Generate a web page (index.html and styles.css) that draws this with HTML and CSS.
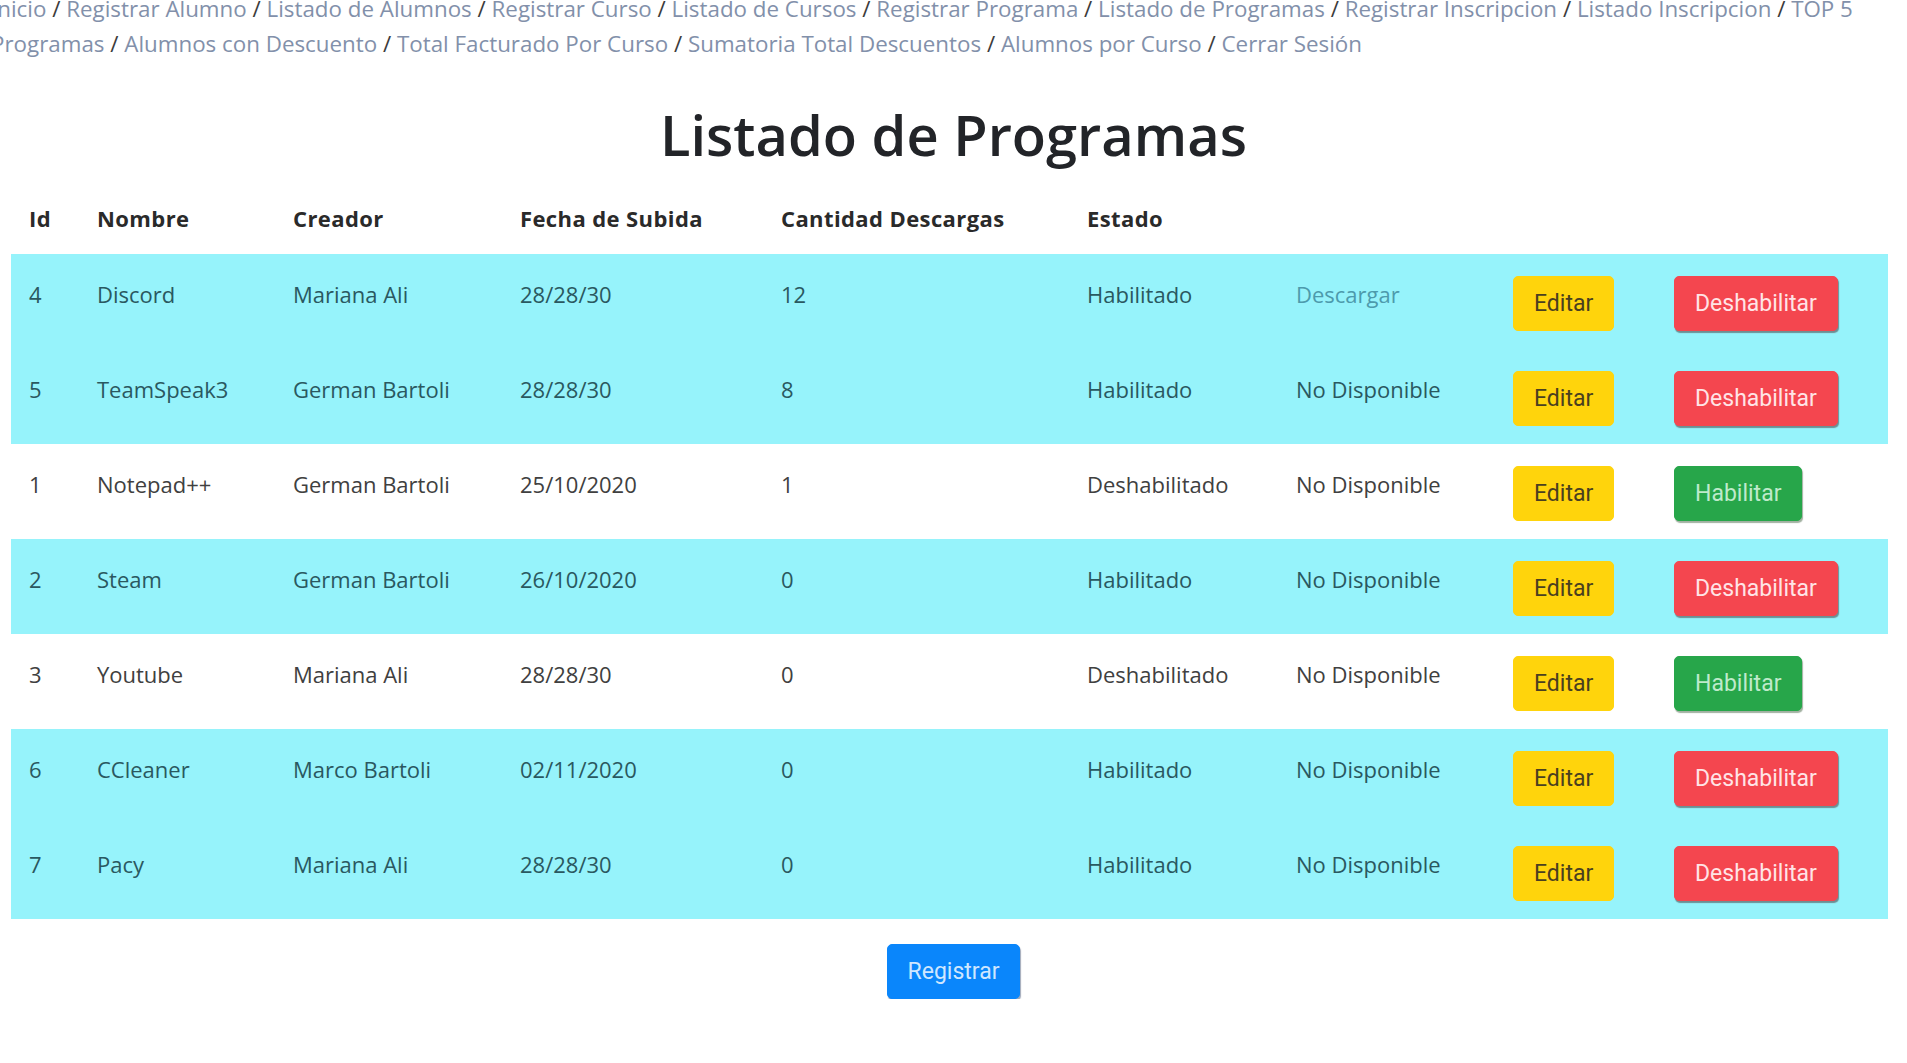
FILE: index.html
```html
<!DOCTYPE html>
<html lang="es">
<head>
<meta charset="utf-8">
<title>Listado de Programas</title>
<link rel="stylesheet" href="styles.css">
</head>
<body>
<nav class="topnav">
  <a href="#">Inicio</a> / <a href="#">Registrar Alumno</a> / <a href="#">Listado de Alumnos</a> / <a href="#">Registrar Curso</a> / <a href="#">Listado de Cursos</a> / <a href="#">Registrar Programa</a> / <a href="#">Listado de Programas</a> / <a href="#">Registrar Inscripcion</a> / <a href="#">Listado Inscripcion</a> / <a href="#">TOP 5<br>Programas</a> / <a href="#">Alumnos con Descuento</a> / <a href="#">Total Facturado Por Curso</a> / <a href="#">Sumatoria Total Descuentos</a> / <a href="#">Alumnos por Curso</a> / <a href="#">Cerrar Sesión</a>
</nav>

<h1 class="page-title">Listado de Programas</h1>

<table class="prog-table">
  <colgroup>
    <col class="c-id"><col class="c-nombre"><col class="c-creador"><col class="c-fecha"><col class="c-cant"><col class="c-estado"><col class="c-desc"><col class="c-edit"><col class="c-toggle">
  </colgroup>
  <thead>
    <tr><th>Id</th><th>Nombre</th><th>Creador</th><th>Fecha de Subida</th><th>Cantidad Descargas</th><th>Estado</th><th></th><th></th><th></th></tr>
  </thead>
  <tbody>
    <tr class="row-info"><td>4</td><td>Discord</td><td>Mariana Ali</td><td>28/28/30</td><td>12</td><td>Habilitado</td><td><a class="dl" href="#">Descargar</a></td><td><button class="btn btn-warning">Editar</button></td><td><button class="btn btn-danger">Deshabilitar</button></td></tr>
    <tr class="row-info"><td>5</td><td>TeamSpeak3</td><td>German Bartoli</td><td>28/28/30</td><td>8</td><td>Habilitado</td><td>No Disponible</td><td><button class="btn btn-warning">Editar</button></td><td><button class="btn btn-danger">Deshabilitar</button></td></tr>
    <tr class="row-plain"><td>1</td><td>Notepad++</td><td>German Bartoli</td><td>25/10/2020</td><td>1</td><td>Deshabilitado</td><td>No Disponible</td><td><button class="btn btn-warning">Editar</button></td><td><button class="btn btn-success">Habilitar</button></td></tr>
    <tr class="row-info"><td>2</td><td>Steam</td><td>German Bartoli</td><td>26/10/2020</td><td>0</td><td>Habilitado</td><td>No Disponible</td><td><button class="btn btn-warning">Editar</button></td><td><button class="btn btn-danger">Deshabilitar</button></td></tr>
    <tr class="row-plain"><td>3</td><td>Youtube</td><td>Mariana Ali</td><td>28/28/30</td><td>0</td><td>Deshabilitado</td><td>No Disponible</td><td><button class="btn btn-warning">Editar</button></td><td><button class="btn btn-success">Habilitar</button></td></tr>
    <tr class="row-info"><td>6</td><td>CCleaner</td><td>Marco Bartoli</td><td>02/11/2020</td><td>0</td><td>Habilitado</td><td>No Disponible</td><td><button class="btn btn-warning">Editar</button></td><td><button class="btn btn-danger">Deshabilitar</button></td></tr>
    <tr class="row-info"><td>7</td><td>Pacy</td><td>Mariana Ali</td><td>28/28/30</td><td>0</td><td>Habilitado</td><td>No Disponible</td><td><button class="btn btn-warning">Editar</button></td><td><button class="btn btn-danger">Deshabilitar</button></td></tr>
  </tbody>
</table>

<div class="actions">
  <button class="btn btn-primary">Registrar</button>
</div>
</body>
</html>
```

FILE: styles.css
```css
html, body {
  margin: 0;
  padding: 0;
  background: #ffffff;
}

body {
  font-family: "Open Sans", "Noto Sans", sans-serif;
  font-size: 22px;
  color: #3a3a3a;
  overflow: hidden;
}

.topnav {
  margin: -9px 0 0 -9px;
  font-size: 22.35px;
  line-height: 35px;
  white-space: nowrap;
  color: #3c3c3c;
}

.topnav a {
  color: #8290aa;
  text-decoration: none;
}

.page-title {
  margin: 39px 0 0 0;
  text-align: center;
  font-size: 56px;
  line-height: 68px;
  font-weight: 600;
  color: #222428;
}

.prog-table {
  margin: 18px 0 0 11px;
  width: 1877px;
  table-layout: fixed;
  border-collapse: collapse;
}

.c-id { width: 68px; }
.c-nombre { width: 196px; }
.c-creador { width: 227px; }
.c-fecha { width: 261px; }
.c-cant { width: 306px; }
.c-estado { width: 209px; }
.c-desc { width: 217px; }
.c-edit { width: 161px; }
.c-toggle { width: 232px; }

.prog-table th {
  text-align: left;
  font-weight: 700;
  letter-spacing: 0.4px;
  color: #2a2a2a;
  padding: 16px 0 19px 18px;
  line-height: 33px;
  white-space: nowrap;
}

.prog-table td {
  padding: 22px 0 18px 18px;
  line-height: 37px;
  vertical-align: top;
  white-space: nowrap;
}

.row-info td {
  background: #96f3fb;
  color: #2a5860;
}

.row-plain td {
  background: #ffffff;
  color: #404040;
}

.dl {
  color: #4d9aac;
  text-decoration: none;
}

.btn {
  display: inline-block;
  font-family: Roboto, "Noto Sans", sans-serif;
  font-size: 23px;
  line-height: 33px;
  padding: 10px 20px;
  border: 1px solid transparent;
  border-radius: 5px;
  cursor: pointer;
  vertical-align: top;
}

.btn-warning {
  background: #ffd40c;
  border-color: #ffd40c;
  color: #4a4020;
}

.btn-danger {
  background: #f4464f;
  border-color: #f4464f;
  color: #ffe4e6;
  box-shadow: 1px 2px 1px rgba(60, 20, 20, 0.45);
}

.btn-success {
  background: #27a64a;
  border-color: #27a64a;
  color: #bfeacb;
  box-shadow: 1px 2px 1px rgba(20, 60, 20, 0.4);
}

.btn-primary {
  background: #0a86fb;
  border-color: #0a86fb;
  color: #cfe7ff;
  box-shadow: 1px 2px 1px rgba(20, 40, 80, 0.4);
}

.actions {
  display: flex;
  justify-content: center;
  margin-top: 25px;
}
```
